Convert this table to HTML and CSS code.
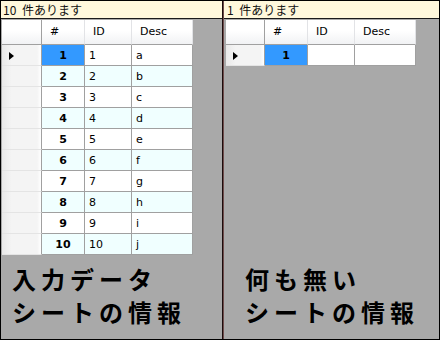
FILE: index.html
```html
<!DOCTYPE html>
<html lang="ja">
  <head>
    <meta charset="UTF-8" />
    <title>シート情報</title>
    <link rel="stylesheet" href="styles.css">
  </head>
  <body>
    <div class="window">
      <section class="sheet sheet-input">
        <div class="status">10 件あります</div>
        <div class="grid">
          <div class="corner"></div>
          <div class="colhead">#</div>
          <div class="colhead">ID</div>
          <div class="colhead">Desc</div>

          <div class="rowhead current"></div><div class="cell num selected">1</div><div class="cell">1</div><div class="cell">a</div>
          <div class="rowhead"></div><div class="cell num alt">2</div><div class="cell alt">2</div><div class="cell alt">b</div>
          <div class="rowhead"></div><div class="cell num">3</div><div class="cell">3</div><div class="cell">c</div>
          <div class="rowhead"></div><div class="cell num alt">4</div><div class="cell alt">4</div><div class="cell alt">d</div>
          <div class="rowhead"></div><div class="cell num">5</div><div class="cell">5</div><div class="cell">e</div>
          <div class="rowhead"></div><div class="cell num alt">6</div><div class="cell alt">6</div><div class="cell alt">f</div>
          <div class="rowhead"></div><div class="cell num">7</div><div class="cell">7</div><div class="cell">g</div>
          <div class="rowhead"></div><div class="cell num alt">8</div><div class="cell alt">8</div><div class="cell alt">h</div>
          <div class="rowhead"></div><div class="cell num">9</div><div class="cell">9</div><div class="cell">i</div>
          <div class="rowhead"></div><div class="cell num alt">10</div><div class="cell alt">10</div><div class="cell alt">j</div>
        </div>
        <p class="caption">入力データ<br>シートの情報</p>
      </section>

      <div class="divider"></div>

      <section class="sheet sheet-empty">
        <div class="status">1 件あります</div>
        <div class="grid">
          <div class="corner"></div>
          <div class="colhead">#</div>
          <div class="colhead">ID</div>
          <div class="colhead">Desc</div>

          <div class="rowhead current"></div><div class="cell num selected">1</div><div class="cell"></div><div class="cell"></div>
        </div>
        <p class="caption">何も無い<br>シートの情報</p>
      </section>
    </div>
  </body>
</html>
```

FILE: styles.css
```css
body {
  margin: 0;
  font-family: 'DejaVu Sans', Verdana, sans-serif;
}
.window {
  width: 440px;
  height: 340px;
  box-sizing: border-box;
  border: 1px solid #000;
  display: flex;
  background: #a9a9a9;
}
.sheet {
  display: flex;
  flex-direction: column;
  min-width: 0;
}
.sheet-input {
  width: 221px;
}
.sheet-empty {
  flex: 1;
}
.divider {
  width: 1px;
  background: #1c0c0c;
  border-right: 1px solid #6e4c4c;
}
.status {
  height: 17px;
  line-height: 17px;
  background: #fff8dc;
  border-bottom: 1px solid #1a1a1a;
  padding-left: 2px;
  font-family: 'Noto Sans CJK JP', sans-serif;
  font-size: 12px;
  word-spacing: 3px;
  color: #111;
  white-space: nowrap;
}
.sheet-empty .status {
  padding-left: 3px;
}

/* data grid */
.grid {
  display: grid;
  grid-template-columns: 40px 43px 47px 61px;
  grid-template-rows: 25px;
  grid-auto-rows: 21px;
  margin: 1px 0 0 1px;
  align-self: flex-start;
  font-size: 11px;
  color: #000;
}
.sheet-empty .grid {
  margin-left: 2px;
  grid-template-columns: 39px 43px 47px 61px;
}
.grid > div {
  box-sizing: border-box;
}
.corner,
.colhead {
  background: linear-gradient(#ffffff, #ffffff 45%, #f1f2f4);
  border-right: 1px solid #e2e3e6;
  border-bottom: 1px solid #a0a0a0;
}
.corner {
  border-right: 1px solid #a0a0a0;
}
.colhead {
  padding-left: 8px;
  line-height: 24px;
}
.rowhead {
  position: relative;
  background: linear-gradient(to right, #e9e9e9, #f4f4f4 25%, #f4f4f4 90%, #ffffff);
  border-right: 1px solid #a0a0a0;
  border-bottom: 1px solid #e4e4e4;
}
.rowhead.current::after {
  content: '';
  position: absolute;
  left: 7px;
  top: 7px;
  border-left: 5px solid #000;
  border-top: 4px solid transparent;
  border-bottom: 4px solid transparent;
}
.cell {
  background: #fff;
  border-right: 1px solid #a0a0a0;
  border-bottom: 1px solid #a0a0a0;
  padding-left: 4px;
  line-height: 21px;
  white-space: nowrap;
}
.cell.alt {
  background: #f0ffff;
}
.cell.num {
  padding-left: 0;
  text-align: center;
  font-weight: bold;
}
.cell.selected {
  background: #3399ff;
}

.caption {
  margin: auto 0 0;
  padding: 0 0 11px 11px;
  font-family: 'Noto Sans CJK JP', sans-serif;
  font-weight: bold;
  font-size: 24px;
  line-height: 33px;
  letter-spacing: 5px;
  color: #000;
  white-space: nowrap;
}
.sheet-empty .caption {
  padding-left: 21px;
}
```
